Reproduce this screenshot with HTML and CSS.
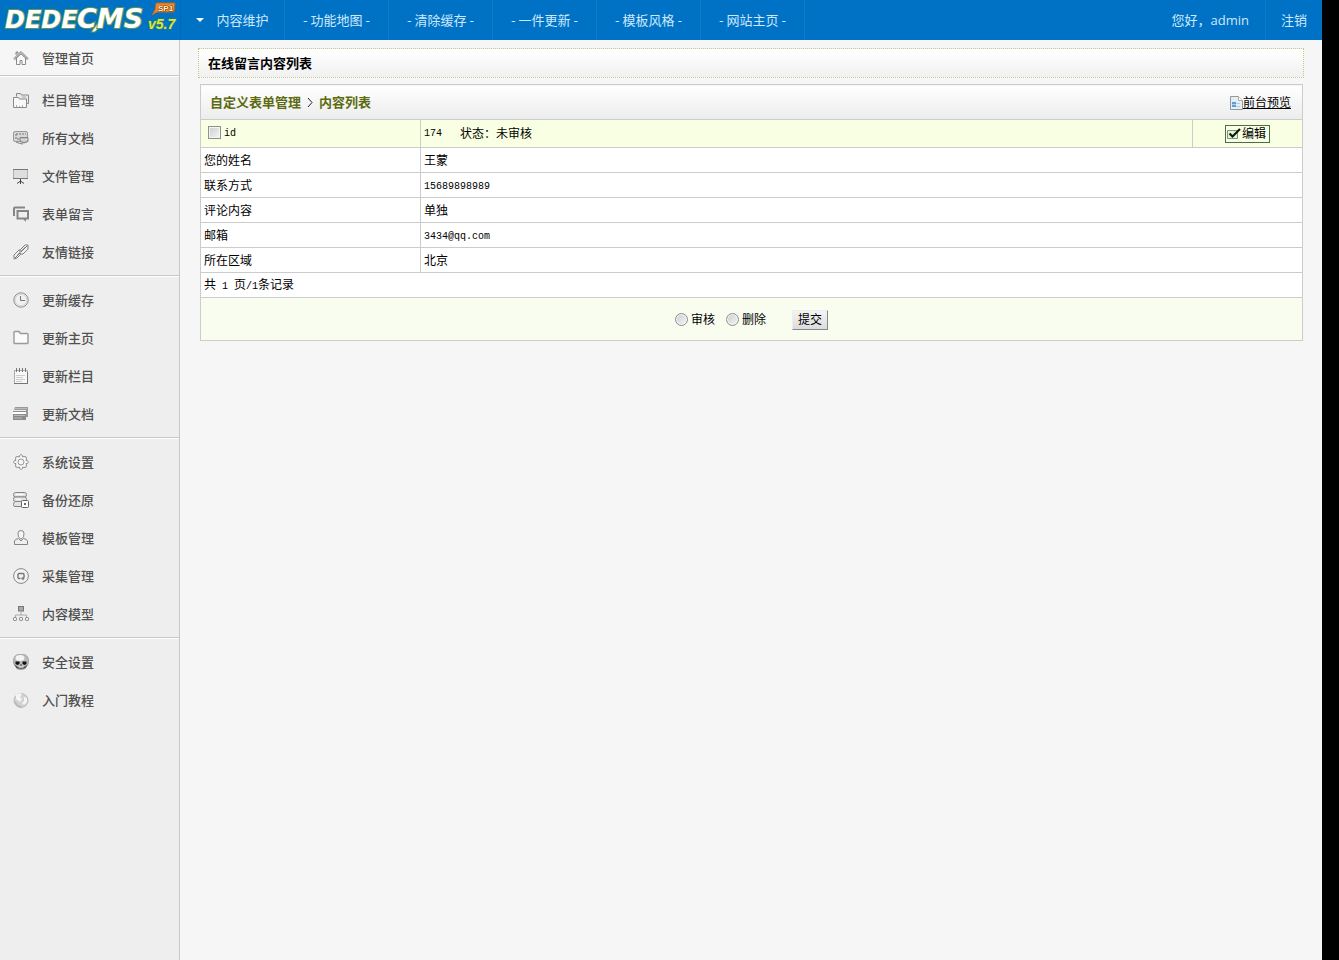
FILE: index.html
```html
<!DOCTYPE html>
<html lang="zh-CN">
<head>
<meta charset="utf-8">
<title>在线留言内容列表</title>
<link rel="stylesheet" href="styles.css">
</head>
<body>
<div class="app">
  <header class="topbar">
    <a class="logo" href="#" aria-label="DEDECMS v5.7 SP1">
      <svg width="180" height="40" viewBox="0 0 180 40">
        <path d="M91 32l6-8h6l-8 8z" fill="#fff" stroke="#5f9650" stroke-width="1.200"/>
        <g class="logo-word"><text x="5" y="28">DEDE</text><text class="logo-cms" x="77" y="28">CMS</text></g>
        <text class="logo-version" x="148" y="29">v5.7</text>
        <path d="M156 3h19l-1 9h-17l-5 3 3-5z" fill="#f08a2c" stroke="#b86520"/>
        <text class="logo-tag" x="158" y="11">SP1</text>
      </svg>
    </a>
    <nav class="topnav">
      <a class="topnav-item" href="#"><svg class="caret" width="8" height="4" viewBox="0 0 8 4"><path d="M0 0h8L4 4z" fill="#fff"/></svg>内容维护</a>
      <a class="topnav-item" href="#">- 功能地图 -</a>
      <a class="topnav-item" href="#">- 清除缓存 -</a>
      <a class="topnav-item" href="#">- 一件更新 -</a>
      <a class="topnav-item" href="#">- 模板风格 -</a>
      <a class="topnav-item" href="#">- 网站主页 -</a>
    </nav>
    <div class="account"><span class="greeting">您好，admin</span><a class="logout" href="#">注销</a></div>
  </header>

  <div class="body">
    <aside class="sidebar">
      <div class="group group-home">
        <a class="side-item" href="#"><svg class="icon" viewBox="0 0 16 16"><path d="M3.500 8v6.500h3.500v-4h2v4h3.500V8L8 3.500z" fill="#fafafa" stroke="#8a8a8a"/><path d="M.8 8.500L8 1.500l7.200 7-1 1L8 3.800 1.800 9.500zM3 5V2h2v1.500" fill="#ccc" stroke="#777" stroke-width=".8"/></svg>管理首页</a>
      </div>
      <div class="group">
        <a class="side-item" href="#"><svg class="icon" viewBox="0 0 16 16"><path d="M3.500 4.500V1.500h4l1 1.500h7v8.500h-2" fill="#e8e8e8" stroke="#8a8a8a"/><path d="M.5 15.500v-10h5l1 1.500h7v8.500z" fill="#f8f8f8" stroke="#8a8a8a"/><path d="M3.500 15v-2m3 2v-1m3 1v-2M9 5h4" stroke="#aaa"/></svg>栏目管理</a>
        <a class="side-item" href="#"><svg class="icon" viewBox="0 0 16 16"><rect x=".5" y="1.500" width="14" height="10" rx="1.500" fill="#d8d8d8" stroke="#999"/><path d="M3 4h10M3 4v5h4" fill="none" stroke="#777" stroke-dasharray="2 1"/><path d="M7 7.500h8v4q-4 3-8 0zM3 12q4 2 7 2" fill="#bbb" stroke="#858585"/><path d="M8 9.500q3 1.500 6 0" fill="none" stroke="#eee"/></svg>所有文档</a>
        <a class="side-item" href="#"><svg class="icon" viewBox="0 0 16 16"><path d="M.5 1.500h14v9H.5z" fill="#dedede" stroke="#b0b0b0"/><path d="M0 1.500h15M0 10.500h15" stroke="#777"/><path d="M7.500 11v2M4 15.500l3.500-2.500 3.500 2.500M7.500 13v3" fill="none" stroke="#444"/></svg>文件管理</a>
        <a class="side-item" href="#"><svg class="icon" viewBox="0 0 16 16"><path d="M1 10V2.500Q1 1.500 2 1.500h10" fill="none" stroke="#858585" stroke-width="2"/><path d="M4.500 5h10.500v7.500H4.500z" fill="#eee" stroke="#858585" stroke-width="2"/><path d="M10 13h3v3z" fill="#858585"/></svg>表单留言</a>
        <a class="side-item" href="#"><svg class="icon" viewBox="0 0 16 16"><g fill="#f4f4f4" stroke="#808080"><path d="M1 15v-4l5-5h3v3l-5 5z"/><path d="M7 10V6l5-5h3v4l-5 5z"/></g><path d="M2 14l5-5M8 8l6-6" stroke="#777"/><path d="M4 11l8-8" stroke="#aaa"/></svg>友情链接</a>
      </div>
      <div class="group">
        <a class="side-item" href="#"><svg class="icon" viewBox="0 0 16 16"><circle cx="8" cy="8" r="7.200" fill="#f0f0f0" stroke="#8d8d8d"/><circle cx="8" cy="8" r="5.800" fill="none" stroke="#d5d5d5"/><path d="M7.500 4v4.500h4.500" fill="none" stroke="#777"/></svg>更新缓存</a>
        <a class="side-item" href="#"><svg class="icon" viewBox="0 0 16 16"><path d="M1 13V2.500Q1 1.500 2 1.500h4l1.500 2H14q1 0 1 1V13q0 .5-1 .5H2q-1 0-1-.5z" fill="#fbfbfb" stroke="#9a9a9a" stroke-width="1.400"/></svg>更新主页</a>
        <a class="side-item" href="#"><svg class="icon" viewBox="0 0 16 16"><path d="M1.500 2.500h13v13h-13z" fill="#f8f8f8" stroke="#aaa"/><path d="M1 15.500h14M14.500 4v11" stroke="#777"/><path d="M3.500 0v4m3-4v4m3-4v4m3-4v4" stroke="#777"/><path d="M3 7.500h9M3 9.500h7M3 11.500h9M3 13.500h6" stroke="#ccc"/></svg>更新栏目</a>
        <a class="side-item" href="#"><svg class="icon" viewBox="0 0 16 16"><path d="M2 1h13v10h-2V4H1z" fill="#999"/><path d="M2 2.500h12" stroke="#bbb"/><path d="M0 5h13v9H0z" fill="#8b8b8b"/><path d="M0 6h13v2H0z" fill="#fff"/><path d="M1 9.500h11M1 12h8" stroke="#bbb"/></svg>更新文档</a>
      </div>
      <div class="group">
        <a class="side-item" href="#"><svg class="icon" viewBox="0 0 16 16"><path d="M6.500 1.500Q8-.5 9.500 1.500V3L11 2.500q3-.5 2.500 2.500L13 6.500h1.500Q16.500 8 14.500 9.500H13l.5 1.500q.5 3-2.500 2.500L9.500 13v1.500Q8 16.500 6.500 14.500V13L5 13.500Q2 14 2.500 11L3 9.500H1.500Q-.5 8 1.500 6.500H3L2.500 5Q2 2 5 2.500L6.500 3z" fill="#f6f6f6" stroke="#888" stroke-width=".9"/><circle cx="8" cy="8" r="3" fill="#f4f4f4" stroke="#999"/></svg>系统设置</a>
        <a class="side-item" href="#"><svg class="icon" viewBox="0 0 16 16"><g fill="#e4e4e4" stroke="#858585"><rect x=".5" y=".5" width="13" height="4.500" rx="2"/><rect x=".5" y="5" width="13" height="4.500" rx="2"/><path d="M2 9.500h7v5H2q-1.500 0-1.500-2t1.500-3z"/></g><path d="M3 2.500h7M3 7h5" stroke="#fff"/><rect x="8.500" y="8.500" width="7" height="7" rx="1" fill="#fff" stroke="#666"/><path d="M11 11h2v2h-2z" fill="#666"/></svg>备份还原</a>
        <a class="side-item" href="#"><svg class="icon" viewBox="0 0 16 16"><path d="M5.500 8.500Q2 9 1.500 11v3.500h13V11Q14 9 10.500 8.500L8 11z" fill="#eee" stroke="#858585"/><path d="M8 .5q3 0 3 3 0 4-2 5l-1 .5-1-.5q-2-1-2-5 0-3 3-3z" fill="#f5f5f5" stroke="#858585"/></svg>模板管理</a>
        <a class="side-item" href="#"><svg class="icon" viewBox="0 0 16 16"><circle cx="8" cy="8" r="7.400" fill="#f2f2f2" stroke="#888"/><path d="M7.500 10.500H6q-1 0-1-1V6.500q0-1 1-1h4q1 0 1 1v3q0 1-1 1" fill="none" stroke="#777" stroke-width="1.400"/><path d="M8 10.500l2.500-2v4z" fill="#777"/></svg>采集管理</a>
        <a class="side-item" href="#"><svg class="icon" viewBox="0 0 16 16"><rect x="5.500" y=".5" width="5" height="4.500" fill="#aaa" stroke="#777"/><path d="M8 5v4M2.500 11V9h11v2" fill="none" stroke="#aaa"/><g fill="#eee" stroke="#777"><rect x=".5" y="11.500" width="3" height="3" rx="1"/><rect x="6.500" y="11.500" width="3" height="3" rx="1"/><rect x="12.500" y="11.500" width="3" height="3" rx="1"/></g></svg>内容模型</a>
      </div>
      <div class="group group-last">
        <a class="side-item" href="#"><svg class="icon" viewBox="0 0 16 16"><path d="M.5 9Q-.5 0 8 0t7.500 9q0 2-3 3v2.500Q8 17 3.500 14.500V12Q.5 11 .5 9z" fill="#bbb" stroke="#888" stroke-width=".6"/><ellipse cx="7" cy="4" rx="4.500" ry="3" fill="#f4f4f4"/><path d="M2.500 7.500h4v2.500l-2 1-2-1zM9.500 7.500h4v2.500l-2 1-2-1zM8 10l1 1.500H7z" fill="#111"/><path d="M1 10.500l3 2q4 2 8 0l3-2-2 3q-5 2.500-10 0z" fill="#444"/><path d="M5.500 12.500h5v1h-5z" fill="#eee"/></svg>安全设置</a>
        <a class="side-item" href="#"><svg class="icon" viewBox="0 0 16 16"><circle cx="8" cy="8.500" r="7" fill="#d2d2d2" stroke="#aaa" stroke-width=".7"/><path d="M3 3q4-3 6-1L7 5l2 2-2 3-4-3zM11 5l3 1v4l-3 3-2-2 2-2z" fill="#f5f5f5"/><path d="M2 10q2 4 6 5" fill="none" stroke="#aaa"/></svg>入门教程</a>
      </div>
    </aside>

    <main class="main">
      <h1 class="page-title">在线留言内容列表</h1>
      <form class="list-form">
        <table class="list">
          <colgroup><col class="col-name"><col><col class="col-action"></colgroup>
          <thead>
            <tr class="row-head"><th colspan="3"><div class="head-bar">
              <span class="crumbs"><a href="#">自定义表单管理</a><svg width="6" height="9" viewBox="0 0 6 9"><path d="M1 0l4 4.500L1 9" fill="none" stroke="#222"/></svg><a href="#">内容列表</a></span>
              <a class="preview" href="#"><svg width="13" height="14" viewBox="0 0 13 14"><path d="M.5.500h8l4 4v9H.5z" fill="#e9edf0" stroke="#8e9aa3"/><path d="M8.500.500v4h4" fill="#fff" stroke="#a5afb6"/><path d="M2 6h4v5H2z" fill="#5ba0d4"/><path d="M6 7.500h4M2 8.500h4M6 10.500h4" stroke="#b5cfe3"/></svg><span>前台预览</span></a>
            </div></th></tr>
          </thead>
          <tbody>
            <tr class="row-id">
              <td><label class="check"><input type="checkbox"><span class="mono">id</span></label></td>
              <td><span class="status"><span class="mono">174</span><span>状态：未审核</span></span></td>
              <td class="action"><a class="edit" href="#"><svg width="14" height="12" viewBox="0 0 14 12"><path d="M.5 2.500h10v8H.5z" fill="#e4f2dc" stroke="#7b927b"/><path d="M2.500 5.500l3 3L13 1" fill="none" stroke="#061c06" stroke-width="2.200"/></svg>编辑</a></td>
            </tr>
            <tr><td>您的姓名</td><td colspan="2">王蒙</td></tr>
            <tr><td>联系方式</td><td colspan="2"><span class="mono">15689898989</span></td></tr>
            <tr><td>评论内容</td><td colspan="2">单独</td></tr>
            <tr><td>邮箱</td><td colspan="2"><span class="mono">3434@qq.com</span></td></tr>
            <tr><td>所在区域</td><td colspan="2">北京</td></tr>
            <tr><td colspan="3">共<span class="mono"> 1 </span>页<span class="mono">/1</span>条记录</td></tr>
            <tr class="row-submit"><td colspan="3"><div class="submit-bar">
              <label class="radio"><input type="radio" name="act">审核</label>
              <label class="radio"><input type="radio" name="act">删除</label>
              <button class="submit" type="button">提交</button>
            </div></td></tr>
          </tbody>
        </table>
      </form>
    </main>
  </div>
</div>
</body>
</html>
```
FILE: styles.css
```css
* { box-sizing: border-box; }

body {
  margin: 0;
  padding-right: 17px;
  background: #000;
  font-family: "Open Sans", "Noto Sans CJK SC", sans-serif;
  font-size: 13px;
}

a { color: inherit; text-decoration: none; }
svg { flex: none; }

.app {
  min-height: 100vh;
  display: flex;
  flex-direction: column;
  background: #f6f6f6;
}

/* Top bar */
.topbar {
  display: flex;
  height: 40px;
  background: #0072c6;
  color: #cfe8fb;
}
.logo { display: block; width: 180px; }
.logo svg { display: block; }
.logo-word {
  font: italic bold 24px "DejaVu Sans", sans-serif;
  fill: #fff;
  stroke: #5f9650;
  stroke-width: 2px;
  paint-order: stroke;
}
.logo-cms { font-size: 27px; }
.logo-version {
  font: italic bold 14px "Liberation Sans", sans-serif;
  fill: #d6e83c;
  stroke: #3d7c66;
  stroke-width: 1px;
  paint-order: stroke;
}
.logo-tag {
  font: bold 8px "Liberation Sans", sans-serif;
  fill: #fff3c8;
  stroke: #7a3c0a;
  stroke-width: 1px;
  paint-order: stroke;
}
.topnav { display: flex; flex: 1; border-left: 1px solid #0069bb; }
.topnav-item {
  display: flex;
  align-items: center;
  justify-content: center;
  width: 104px;
  border-right: 1px solid #0f7ac9;
  font-family: "Noto Sans CJK SC", sans-serif;
  line-height: 18px;
}
.caret { margin-right: 12px; }
.account { display: flex; line-height: 40px; }
.greeting { padding: 0 16px; border-right: 1px solid #0f7ac9; }
.logout { padding: 0 15px; }

/* Sidebar */
.body { display: flex; flex: 1; }
.sidebar {
  width: 180px;
  flex: none;
  background: #eee;
  border-right: 1px solid #c8c8c8;
  color: #505050;
  font-family: "Noto Sans CJK SC", sans-serif;
  font-weight: 500;
  line-height: 18px;
}
.group {
  padding: 4px 0;
  border-top: 1px solid #fff;
  border-bottom: 1px solid #c8c8c8;
}
.group-home { padding: 0; border-top: 0; background: #f6f6f6; }
.group-last { border-bottom: 0; }
.side-item {
  display: flex;
  align-items: center;
  gap: 13px;
  height: 38px;
  padding-left: 13px;
}
.group-home .side-item { height: 35px; }
.icon { width: 16px; height: 16px; }

/* Content */
.main {
  flex: 1;
  padding: 8px 18px;
  font-family: "Liberation Sans", "Noto Sans CJK SC", sans-serif;
  font-size: 12px;
  color: #000;
}
.page-title {
  margin: 0;
  padding: 1px 9px 0;
  border: 1px dotted #c5c78c;
  background: linear-gradient(#fff, #f1f1f1);
  font-size: 13px;
  line-height: 27px;
}
.list-form { margin: 6px 1px 0 2px; }
.list {
  width: 100%;
  table-layout: fixed;
  border-collapse: collapse;
  background: #fff;
}
.col-name { width: 220px; }
.col-action { width: 110px; }
.list th, .list td {
  height: 25px;
  padding: 2px 3px 0;
  border: 1px solid #ccc;
  text-align: left;
  line-height: 18px;
}
.list .row-head th {
  height: 35px;
  padding: 1px 11px 0 9px;
  background: linear-gradient(#fff, #ececec);
}
.head-bar { display: flex; align-items: center; justify-content: space-between; }
.crumbs {
  display: flex;
  align-items: center;
  gap: 6px;
  color: #5c6b10;
  font-size: 13px;
}
.preview { display: flex; align-items: center; font-weight: normal; text-decoration: underline; }
.list .row-id td { height: 28px; padding-top: 0; background: #f8ffe3; }
.mono { font-family: "Liberation Mono", monospace; font-size: 10px; white-space: pre; }
.check { display: flex; align-items: center; gap: 3px; padding-left: 4px; }
.status { display: flex; align-items: center; gap: 18px; }
.list .action { text-align: center; }
.edit {
  display: inline-flex;
  align-items: center;
  gap: 1px;
  padding: 0 3px 0 1px;
  border: 1px solid #4f6a4f;
  line-height: 16px;
  vertical-align: middle;
}

/* Form controls */
input {
  appearance: none;
  flex: none;
  width: 13px;
  height: 13px;
  margin: 0 0 2px;
  border: 1px solid #8e8f8f;
  background: linear-gradient(135deg, #ccc, #f6f6f6);
  box-shadow: inset 0 0 0 1px #f4f4f4;
}
input[type="radio"] { border-radius: 50%; }
.list .row-submit td { height: 43px; background: #f9fdf0; }
.submit-bar { display: flex; align-items: center; justify-content: center; gap: 11px; }
.radio { display: flex; align-items: center; gap: 3px; }
.submit {
  margin-left: 15px;
  padding: 0 5px;
  border: 1px solid #eee;
  border-right-color: #888;
  border-bottom-color: #888;
  background: linear-gradient(#f4f4f4, #dcdcdc);
  color: #000;
  font: inherit;
  line-height: 18px;
}
```
